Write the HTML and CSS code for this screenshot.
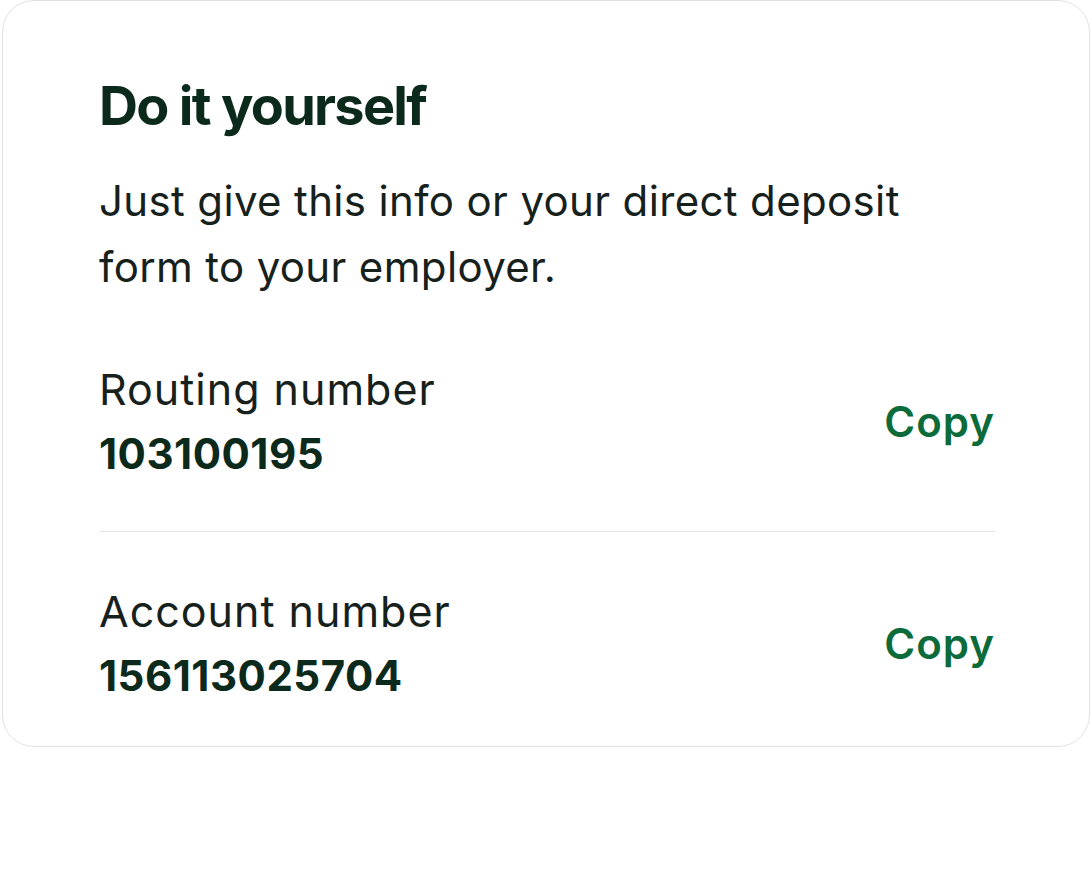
FILE: index.html
```html
<!DOCTYPE html>
<html lang="en">
<head>
    <meta charset="UTF-8">
    <meta name="viewport" content="width=device-width, initial-scale=1.0">
    <title>Direct deposit</title>
    <link rel="stylesheet" href="styles.css">
</head>
<body>
    <div class="card">
        <h2 class="title">Do it yourself</h2>
        <p class="intro">Just give this info or your direct deposit form to your employer.</p>

        <!-- Account details -->
        <div class="field">
            <div class="field-info">
                <div class="field-label">Routing number</div>
                <div class="field-value">103100195</div>
            </div>
            <button class="copy">Copy</button>
        </div>
        <div class="field">
            <div class="field-info">
                <div class="field-label">Account number</div>
                <div class="field-value">156113025704</div>
            </div>
            <button class="copy">Copy</button>
        </div>
    </div>
</body>
</html>
```

FILE: styles.css
```css
body {
    margin: 0;
    padding: 0 2px;
    background: #fff;
    font-family: Inter, "Liberation Sans", sans-serif;
    color: #17211c;
}

/* Card */
.card {
    border: 1px solid #e2e2e2;
    border-radius: 32px;
    padding: 0 94px 0 96px;
    background: #fff;
}

.title {
    margin: 0;
    padding-top: 75px;
    font-size: 54px;
    line-height: 60px;
    font-weight: 700;
    letter-spacing: -1.7px;
    color: #0c2a1b;
}

.intro {
    margin: 32px 0 10px;
    font-size: 42px;
    line-height: 66px;
    letter-spacing: 0.35px;
    max-width: 840px;
}

/* Field rows */
.field {
    display: flex;
    align-items: center;
    justify-content: space-between;
    padding: 54px 0 52px;
}

.field + .field {
    border-top: 1px solid #e6e6e6;
}

.field:last-child {
    padding-bottom: 45px;
}

.field-label {
    font-size: 43px;
    line-height: 50px;
    letter-spacing: 1px;
}

.field-value {
    margin-top: 15px;
    font-size: 42px;
    line-height: 50px;
    font-weight: 700;
    letter-spacing: 0.5px;
    color: #0c2a1b;
}

.copy {
    border: 0;
    padding: 0;
    background: none;
    font-family: inherit;
    font-size: 42px;
    font-weight: 600;
    letter-spacing: 1px;
    color: #0b6b3b;
    cursor: pointer;
}
```
